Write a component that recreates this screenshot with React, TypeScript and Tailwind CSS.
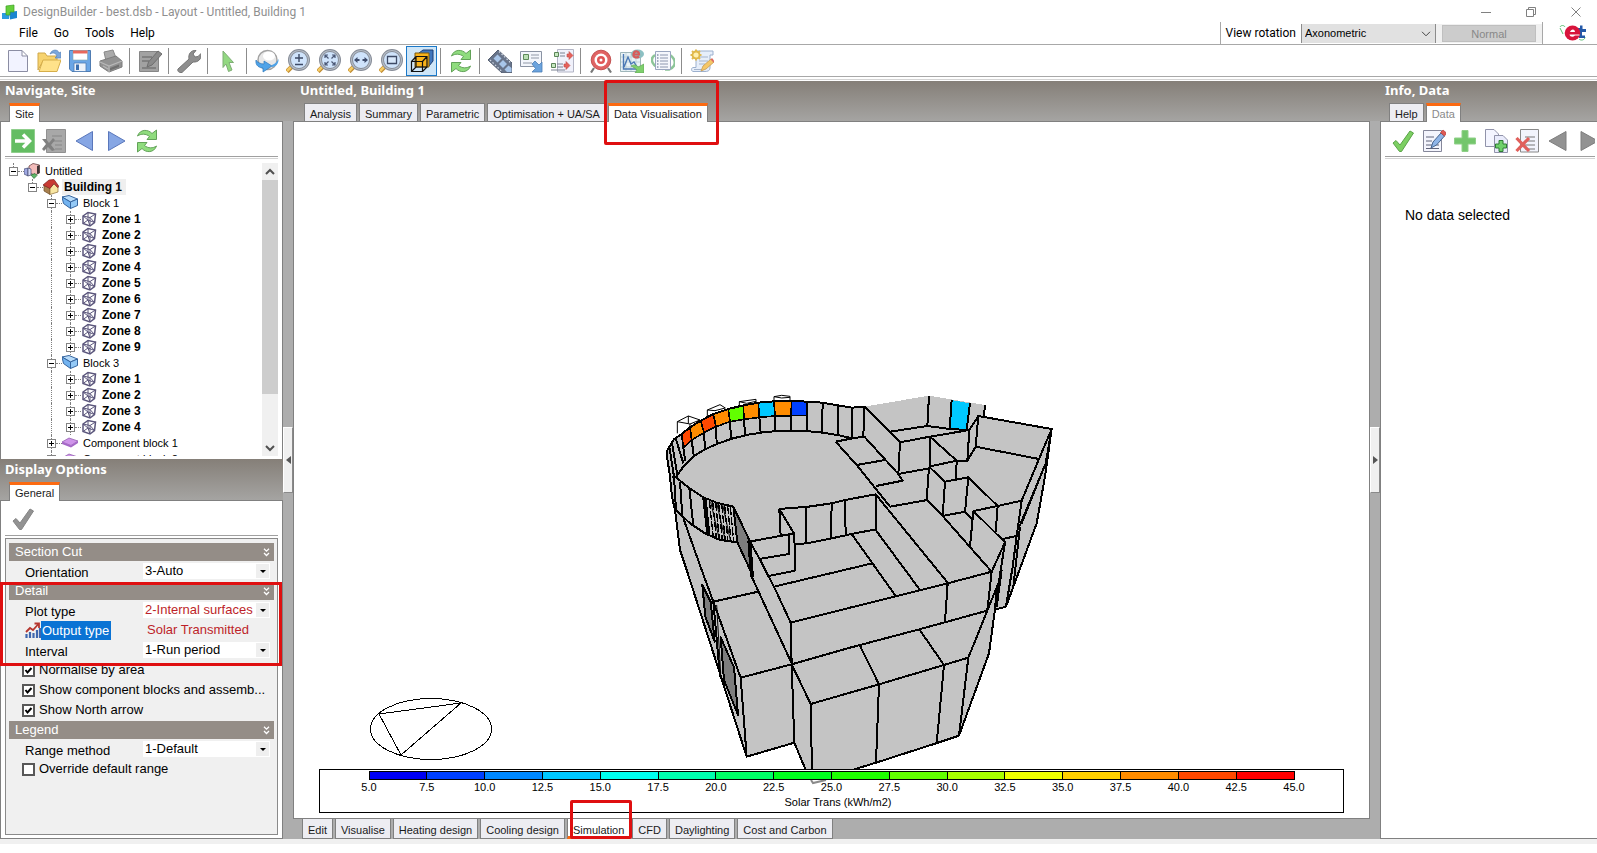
import React from "react";
import clsx from "clsx";

const SANS = "font-['Liberation_Sans',Arial,sans-serif]";
const SMALL = "font-['Liberation_Sans',Arial,sans-serif] text-[11px]";
const UI = "font-['Roboto','Open_Sans',sans-serif]";

type IconName =
  | "new" | "open" | "save" | "print" | "edit" | "wrench" | "cursor" | "orbit"
  | "zoom" | "zoomFit" | "zoomWidth" | "zoomWindow" | "cube" | "refresh" | "film" | "card"
  | "flow" | "target" | "chart" | "report" | "script" | "go" | "clear" | "left"
  | "right" | "check" | "checkGray" | "editNote" | "plus" | "copyAdd" | "deleteList" | "leftGray" | "rightGray";

const magnifier = (
  <>
    <path d="M1 22.500L6 17.500" stroke="#c08a30" strokeWidth="4.500" />
    <path d="M1 22L6 17" stroke="#f5cb66" strokeWidth="2.500" />
    <circle cx="13" cy="11" r="9.500" fill="#cfe3fb" stroke="#858b96" strokeWidth="3" />
    <circle cx="13" cy="11" r="9.500" fill="none" stroke="#b5bcc6" strokeWidth="1.200" />
  </>
);

const tickPath = "M2 14L5 11.500L9 16L19 2L22.500 4L10.500 22.500H8.500Z";

const pageLines = (
  <path d="M10 8H20M10 12H20M10 16H20M10 20H20" stroke="#777" strokeWidth="1" />
);

const icons: Record<IconName, React.ReactNode> = {
  new: <path d="M2.500 1.500H16L21.500 7V22.500H2.500ZM16 1.500V7H21.500" fill="#f2f3ff" stroke="#8b8da3" />,
  open: (
    <>
      <path d="M1 4H8L10 7H20V12H6L1 21Z" fill="#f7d36e" stroke="#d0a84a" />
      <path d="M2 22.500L6 11H24L20 22.500Z" fill="#ffe28a" stroke="#d6ae4a" />
      <path d="M13 5C15 0 21 0 22 4L24 3V9H18L20 7C19 4 16 3 13 5Z" fill="#7ba7dc" stroke="#5f89bd" strokeWidth=".8" />
    </>
  ),
  save: (
    <>
      <path d="M1.500 1.500H22.500V22.500H4L1.500 20Z" fill="#6ba6e6" stroke="#4f7cb2" />
      <path d="M5 1.500H19.500V11H5Z" fill="#fff" stroke="#8aa" strokeWidth=".6" />
      <path d="M5 1.500H19.500V4.500H5Z" fill="#e8685c" />
      <path d="M6 14H18V22.500H6Z" fill="#eef3fa" stroke="#4f7cb2" strokeWidth=".8" />
      <path d="M8 15.500H11V21H8Z" fill="#3b6fb0" />
    </>
  ),
  print: (
    <>
      <path d="M5 3L14 1L17 9L7 12Z" fill="#aaa" stroke="#888" />
      <path d="M1 12L17 7L23 12V18L10 23L1 17Z" fill="#929292" stroke="#7d7d7d" />
      <path d="M1 13L10 17L23 12M10 17V23M4 17L9 20" fill="none" stroke="#b8b8b8" strokeWidth="1.200" />
      <path d="M11 19L20 15.500V18L11 21.500Z" fill="#707070" />
    </>
  ),
  edit: (
    <>
      <path d="M1.500 2.500H20.500V22.500H1.500Z" fill="#a2a2a2" stroke="#868686" />
      <path d="M4 8H14M4 12H11M4 19H18" stroke="#777" strokeWidth="1.500" />
      <path d="M9 18L10.500 13L20 2L24 5L14 16Z" fill="#8a8a8a" stroke="#6e6e6e" />
    </>
  ),
  wrench: (
    <path d="M1 20L12 10C11 5 14 1 19 1.500L16 5L18 8L21 7.500L24 4.500C25 10 21 13.500 16 13L5 23.500C2 24 0 22 1 20Z" fill="#8f8f8f" stroke="#757575" />
  ),
  cursor: <path d="M7 2L17.500 13.500H13L16 21L12.500 22.500L10 15L7 18.500Z" fill="#92d881" stroke="#7fae76" />,
  orbit: (
    <>
      <circle cx="12.500" cy="11" r="9.500" fill="#e8e8e8" stroke="#a2a2a2" strokeWidth="1.500" />
      <ellipse cx="14" cy="7" rx="6" ry="4.500" fill="#fff" />
      <path d="M1 11C0 17 5 19 8 19V23L17 17L9 12V15C5 15 2 13 1 11Z" fill="#4fa3e8" stroke="#2e78bb" strokeWidth=".7" />
      <path d="M23.500 10C24 15 20 18 17 18V16C20 15 22 13 23.500 10Z" fill="#4fa3e8" />
    </>
  ),
  zoom: <>{magnifier}<path d="M9 9H17M13 5V13M9 15.500H17" stroke="#3d4a66" strokeWidth="1.400" /></>,
  zoomFit: (
    <>
      {magnifier}
      <path d="M8 9V6H11M15 6H18V9M18 13V16H15M11 16H8V13M8 6L11.500 9.500M18 6L14.500 9.500M18 16L14.500 12.500M8 16L11.500 12.500" fill="none" stroke="#4a5775" strokeWidth="1.200" />
    </>
  ),
  zoomWidth: <>{magnifier}<path d="M7 11H11.500M14.500 11H19" stroke="#3f4d6c" strokeWidth="1.800" /><path d="M6 11L9.500 8V14ZM20 11L16.500 8V14Z" fill="#3f4d6c" /></>,
  zoomWindow: <>{magnifier}<path d="M8.500 7.500H17.500V14.500H8.500Z" fill="#d8e8fb" stroke="#3d4a66" strokeWidth="1.300" /></>,
  cube: (
    <>
      <path d="M9 4L13 1H23V12L19 17Z" fill="#4177bd" stroke="#1d3f75" />
      <path d="M5 4H19V18H5Z" fill="#f9b31b" stroke="#7b5a13" />
      <path d="M1.500 12.500H12.500V22.500H1.500ZM1.500 12.500L6 7.500H17V18L12.500 22.500M12.500 12.500L17 7.500M6 7.500V18H17M6 18L1.500 22.500" fill="none" stroke="#111" strokeWidth="1.200" />
    </>
  ),
  refresh: (
    <>
      <path d="M2.500 7C5 0 13 0 17 4.500L21.500 1V10.500H12L14.500 7.500C11 4.500 6 4.500 2.500 7Z" fill="#8fdc7e" stroke="#62a258" />
      <path d="M21.500 17C19 24 11 24 7 19.500L2.500 23V13.500H12L9.500 16.500C13 19.500 18 19.500 21.500 17Z" fill="#8fdc7e" stroke="#62a258" />
    </>
  ),
  film: (
    <>
      <path d="M0 11L10 1L24 14V24H14Z" fill="#68748a" stroke="#566072" />
      <path d="M5.500 9.500L9.500 5.500L13.500 9.500L9.500 13.500ZM11 15L15 11L19 15L15 19ZM16.500 20.500L20.500 16.500L23.500 19V23H19Z" fill="#a8c6ea" />
      <path d="M2 11L14.500 23M11 2.500L23.500 14.500" stroke="#d0d8e4" strokeWidth="1.200" strokeDasharray="1.500 2" />
    </>
  ),
  card: (
    <>
      <path d="M1.500 2.500H22.500V17.500H1.500Z" fill="#f3f6fc" stroke="#8a93a3" />
      <path d="M4.500 5.500H9.500V10.500H4.500Z" fill="#b9dfb4" stroke="#5d8a5b" />
      <path d="M12 6H20M12 9H20M4 14H13" stroke="#9098a6" />
      <path d="M13 15L16 12L20 16L23 13V23H13L16.500 19.500Z" fill="#6ba3dd" stroke="#4d7eb5" strokeWidth=".8" />
    </>
  ),
  flow: (
    <>
      <path d="M7.500 .5H23.500V23H7.500Z" fill="#f0f1fb" stroke="#b3b5c5" />
      <path d="M4.500 3.500H8.500V7.500H4.500ZM1.500 14.500H5.500V18.500H1.500Z" fill="#c6e8c0" stroke="#5b8458" />
      <path d="M10 4H15M10 7H15M7 15H13M7 18H13M1 21H15" stroke="#7a8292" />
      <path d="M17 5H19V2.500L23 6.500L19 10.500V8H17ZM14 15H16V12.500L20 16.500L16 20.500V18H14Z" fill="#e5615b" stroke="#c04a48" strokeWidth=".6" />
    </>
  ),
  target: (
    <>
      <path d="M5 19L2 23.500M19 19L22 23.500" stroke="#777" strokeWidth="2.200" />
      <circle cx="12" cy="11" r="9.800" fill="#e06363" stroke="#c35252" />
      <circle cx="12" cy="11" r="6.500" fill="#fff" />
      <circle cx="12" cy="11" r="4" fill="#df5656" />
      <circle cx="12" cy="11" r="1.500" fill="#fff" />
    </>
  ),
  chart: (
    <>
      <path d="M.5 3.500H20.500V22.500H.5Z" fill="#e9f2f6" stroke="#9fb6ba" />
      <path d="M1 8H20M1 13H20M1 18H20M6 4V22M11 4V22M16 4V22" stroke="#b6cbd2" strokeWidth=".7" />
      <path d="M3.500 5V20H18M4 18L8 8L11 15L14 13L17 18" fill="none" stroke="#4a78b4" strokeWidth="1.400" />
      <ellipse cx="17.500" cy="5" rx="6.500" ry="4.500" fill="#8cc0c3" />
      <path d="M13 5.500H19C19 2 14.500 1 13.500 5C13 9 17 9 19 7.500" fill="none" stroke="#d85b5b" strokeWidth="2.200" />
      <path d="M11 17C14 15 17 16 18 18L24 15V24H15L17 21C15 19 13 18 11 17Z" fill="#7ed06d" stroke="#62a558" strokeWidth=".7" />
    </>
  ),
  report: (
    <>
      <path d="M4 6C-2 10 1 18 12 20" fill="none" stroke="#8cc598" strokeWidth="2.500" />
      <path d="M19 6C26 11 25 18 18 20.500H14" fill="none" stroke="#8cc598" strokeWidth="2.500" />
      <path d="M4.500 2.500H19.500V20.500H4.500Z" fill="#f5f7fd" stroke="#9aa6c0" />
      <path d="M9 6H17M9 9H17M9 12H17M9 15H17M9 18H17" stroke="#8c96ae" />
      <path d="M6 6H7.500M6 9H7.500M6 12H7.500M6 15H7.500M6 18H7.500" stroke="#4c5c80" />
    </>
  ),
  script: (
    <>
      <path d="M6 2H23V6H20V19C20 22 17 22.500 15 22.500H3C1 22 1 19 3 18.500H6Z" fill="#e6eefa" stroke="#9cb0ce" />
      <path d="M10 8H18M9 12H18M9 15H15M4 20.500H14" stroke="#a5b4cc" />
      <path d="M6 .5V11.500M.5 6H11.500M2 2L10 10M10 2L2 10" stroke="#e0ba52" strokeWidth="2" />
      <circle cx="6" cy="6" r="3.500" fill="#fff0b0" stroke="#e0b848" strokeWidth="1.800" />
      <path d="M11 22L13 17L21 10L24 13L16 20Z" fill="#f5c768" stroke="#c69b50" strokeWidth=".8" />
      <path d="M20.500 10.500L22 9L24.500 12L23.500 13.500Z" fill="#dd6a62" />
    </>
  ),
  go: (
    <>
      <path d="M.5 .5H23.500V23.500H.5Z" fill="#64bd63" stroke="#8fce8c" />
      <path d="M4 12H18M12 5.500L18.500 12L12 18.500" fill="none" stroke="#fff" strokeWidth="3.500" />
    </>
  ),
  clear: (
    <>
      <path d="M4.500 .5H23.500V23.500H4.500Z" fill="#a8a8a8" stroke="#919191" />
      <path d="M10 7H20M10 12H20M13 16H20M13 20H20" stroke="#868686" />
      <path d="M0 10H4L7 14L11 9L13 11L9 16L13 21L10 22L6 18L2 22L0 20L4 15Z" fill="#808080" />
    </>
  ),
  left: <path d="M19.500 2.500V21.500L3 12Z" fill="#86a6e4" stroke="#5a77bb" />,
  right: <path d="M4.500 2.500V21.500L21 12Z" fill="#86a6e4" stroke="#5a77bb" />,
  check: <path d={tickPath} fill="#7ccf62" stroke="#5aa348" />,
  checkGray: <path d={tickPath} fill="#929292" stroke="#858585" />,
  editNote: (
    <>
      <path d="M1.500 1.500H19.500V22.500H1.500Z" fill="#f4f5fd" stroke="#85879a" />
      <path d="M4 8H12M4 12H10M4 16H17M4 19.500H17" stroke="#61647a" />
      <path d="M9 19L11 13L19 4L22.500 7L14.500 16Z" fill="#8fb5e8" stroke="#46648f" />
      <path d="M18.500 3.500L21 1L24.500 4L22.500 7Z" fill="#df5a55" stroke="#b13e3c" strokeWidth=".7" />
    </>
  ),
  plus: <path d="M9 1.500H15V9H22.500V15H15V22.500H9V15H1.500V9H9Z" fill="#74c66c" stroke="#8fd088" />,
  copyAdd: (
    <>
      <path d="M1.500 .5H10L14.500 5V17.500H1.500Z" fill="#f4f5ff" stroke="#9193aa" />
      <path d="M10.500 6.500H19L23.500 11V23.500H10.500Z" fill="#e9ebfb" stroke="#9193aa" />
      <path d="M15 11.500H19V15H22.500V19H19V22.500H15V19H11.500V15H15Z" fill="#6ed06a" stroke="#2f7b34" />
    </>
  ),
  deleteList: (
    <>
      <path d="M5.500 .5H23.500V23H5.500Z" fill="#f2f4fc" stroke="#888" />
      {pageLines}
      <path d="M1.500 9L14 22M14 9L1.500 22" stroke="#e0605c" strokeWidth="3.200" />
    </>
  ),
  leftGray: <path d="M20 2.500V21.500L3 12Z" fill="#929292" stroke="#7e7e7e" />,
  rightGray: <path d="M4 2.500V21.500L21 12Z" fill="#929292" stroke="#7e7e7e" />,
};

function ToolButton({ icon, label, active }: { icon: IconName; label: string; active?: boolean }) {
  return (
    <button
      type="button"
      aria-label={label}
      className={clsx(
        "flex h-[30px] w-[31px] flex-none items-center justify-center",
        active && "border border-[#1c79c8] bg-[#cfe6f8]"
      )}
    >
      <svg viewBox="0 0 24 24" className="size-6 flex-none" fill="none">
        {icons[icon]}
      </svg>
    </button>
  );
}

const mainTools: ([IconName, string] | null)[] = [
  ["new", "New"], ["open", "Open"], ["save", "Save"], ["print", "Print"], null,
  ["edit", "Edit"], null,
  ["wrench", "Settings"], null,
  ["cursor", "Select"], null,
  ["orbit", "Orbit"], ["zoom", "Zoom"], ["zoomFit", "Zoom to fit"], ["zoomWidth", "Zoom width"], ["zoomWindow", "Zoom window"], ["cube", "Axonometric view"], null,
  ["refresh", "Refresh"], null,
  ["film", "Movie"], ["card", "Card"], ["flow", "Flow"], null,
  ["target", "Target"], ["chart", "Chart"], ["report", "Report"], null,
  ["script", "Script"],
];

function Tab({ label, active, muted, bottom }: { label: string; active?: boolean; muted?: boolean; bottom?: boolean }) {
  return (
    <button
      type="button"
      className={clsx(
        SMALL,
        "relative flex flex-none items-center whitespace-nowrap border-x border-[#808080] px-[5px] leading-4",
        bottom ? "h-5 border-b" : "h-[18px]",
        !active && "bg-[#ededf2] pt-[2px]",
        !active && !bottom && "border-t",
        active && "bg-white",
        active && !bottom && "z-10 -mb-px h-[19px] border-t-[3px] border-t-[#fb6a12]",
        active && bottom && "border-b-[3px] border-b-[#fb6a12] pt-1",
        muted ? "text-[#8a8a8a]" : "text-[#1a1a1a]"
      )}
    >
      {label}
    </button>
  );
}

function PanelHeader({ title, children, className }: { title: string; children: React.ReactNode; className?: string }) {
  return (
    <div className={clsx("h-10 flex-none", className)}>
      <h2 className="pl-[5px] font-['Noto_Sans','DejaVu_Sans',sans-serif] text-[13px] leading-[19px] font-bold text-white">{title}</h2>
      <div className="mt-[3px] flex items-end gap-[2px] pl-[9px]">{children}</div>
    </div>
  );
}

function Rule() {
  return <div className="h-[3px] flex-none border-t border-b border-t-[#a0a0a0] border-b-[#d4d4d4]" />;
}

/* Navigator tree */
type Kind = "site" | "building" | "block" | "zone" | "component";
type Node = { level: number; kind: Kind; label: string };

const zones = (n: number): Node[] =>
  Array.from({ length: n }, (_, i) => ({ level: 3, kind: "zone", label: `Zone ${i + 1}` }));

const tree: Node[] = [
  { level: 0, kind: "site", label: "Untitled" },
  { level: 1, kind: "building", label: "Building 1" },
  { level: 2, kind: "block", label: "Block 1" },
  ...zones(9),
  { level: 2, kind: "block", label: "Block 3" },
  ...zones(4),
  { level: 2, kind: "component", label: "Component block 1" },
  { level: 2, kind: "component", label: "Component block 2" },
];

const treeIcons: Record<Kind, React.ReactNode> = {
  site: (
    <>
      <path d="M5 3L9 .5L15.500 2V10L11 12L5 10Z" fill="#f3bdbb" stroke="#6a4545" strokeWidth=".8" />
      <path d="M13 3L15.500 2V10L13 11Z" fill="#403636" />
      <path d="M0 6L4 5V13L0 11Z" fill="#9fa8e2" stroke="#44496f" strokeWidth=".7" />
      <path d="M4 5L7 6V12L4 13Z" fill="#d5d9f8" stroke="#44496f" strokeWidth=".7" />
      <path d="M7 12L11 10.500L13 12.500L10 15.500Z" fill="#5fb868" stroke="#2d6b36" strokeWidth=".7" />
    </>
  ),
  building: (
    <>
      <path d="M1 6L7 9V15.500L1 12Z" fill="#a8804e" stroke="#6b4a25" strokeWidth=".7" />
      <path d="M7 9L11 5L15 8V13L7 15.500Z" fill="#f8e6a2" stroke="#8a6a35" strokeWidth=".7" />
      <path d="M0 6L6 1L11 .5L16 7.500L14.500 8.500L11 4.500L7 9.500Z" fill="#c93a33" stroke="#7a2422" strokeWidth=".7" />
    </>
  ),
  block: (
    <>
      <path d="M0 2L7 .5L15.500 4L8.500 7Z" fill="#b8dcfa" stroke="#35649e" />
      <path d="M0 2L8.500 7V13.500L1.500 8.500Z" fill="#72b3f0" stroke="#35649e" />
      <path d="M8.500 7L15.500 4V10.500L8.500 13.500Z" fill="#94c9f6" stroke="#35649e" />
    </>
  ),
  zone: (
    <g fill="none" stroke="#5b567c">
      <path d="M2 5L7 1.500L14.500 3L13.500 11.500L9 15L2 12.500Z" strokeWidth="1.500" />
      <path d="M2 5L9 6.500L14.500 3M9 6.500V15M7 1.500V9L2 12.500M7 9L13.500 11.500M9 6.500L13.500 11.500M2 5L7 9L9 15" strokeWidth="1" />
    </g>
  ),
  component: (
    <>
      <path d="M0 7L7 3L16 6L9 10.500Z" fill="#cf94ea" stroke="#8a56a8" strokeWidth=".7" />
      <path d="M0 7L9 10.500L16 6V8L9 12.500L0 9Z" fill="#a566c8" />
    </>
  ),
};

function TreeRow({ node }: { node: Node }) {
  const bold = node.kind === "zone" || node.kind === "building";
  const closed = node.kind === "zone" || node.kind === "component";
  return (
    <li className="flex h-4 flex-none items-center">
      {Array.from({ length: node.level }, (_, i) => (
        <span key={i} className="h-full w-[19px] flex-none pl-1">
          {i === 2 && <span className="block h-full border-l border-dotted border-[#808080]" />}
        </span>
      ))}
      <span className="flex h-full w-[9px] flex-none flex-col items-center">
        <span className="flex-1 border-l border-dotted border-[#808080]" />
        <button type="button" aria-label={`Toggle ${node.label}`} className="flex size-[9px] flex-none items-center justify-center border border-[#848484] bg-white">
          <svg viewBox="0 0 5 5" className="size-[5px]" shapeRendering="crispEdges">
            <path d={closed ? "M0 2.500H5M2.500 0V5" : "M0 2.500H5"} stroke="#000" />
          </svg>
        </button>
        <span className={clsx("flex-1 border-l border-dotted", node.level > 1 ? "border-[#808080]" : "border-transparent")} />
      </span>
      <span className="w-[6px] flex-none border-t border-dotted border-[#808080]" />
      <svg viewBox="0 0 16 16" className="size-4 flex-none">{treeIcons[node.kind]}</svg>
      <span
        className={clsx(
          "ml-[3px] px-[2px] leading-4 whitespace-nowrap text-black",
          bold ? clsx(SANS, "text-[12px] font-bold") : SMALL,
          node.kind === "building" && "bg-[#efefef] pr-1"
        )}
      >
        {node.label}
      </span>
    </li>
  );
}

function Chevron({ d }: { d: string }) {
  return (
    <svg viewBox="0 0 10 10" className="size-[10px]" fill="none" stroke="#505050" strokeWidth="2">
      <path d={d} />
    </svg>
  );
}

function Navigator() {
  return (
    <section className="flex min-h-0 flex-1 flex-col">
      <PanelHeader title="Navigate, Site">
        <Tab label="Site" active />
      </PanelHeader>
      <div className="flex min-h-0 flex-1 flex-col border-x border-t border-[#808080] bg-white px-1 pb-[3px]">
        <div className="flex h-[34px] flex-none items-center pt-1 pl-[2px]">
          <ToolButton icon="go" label="Go" />
          <ToolButton icon="clear" label="Clear" />
          <ToolButton icon="left" label="Previous" />
          <ToolButton icon="right" label="Next" />
          <ToolButton icon="refresh" label="Reload" />
        </div>
        <Rule />
        <div className="mt-1 flex min-h-0 flex-1 overflow-hidden">
          <ul className="min-w-0 flex-1 overflow-hidden pl-1">
            {tree.map((node, i) => (
              <TreeRow key={i} node={node} />
            ))}
          </ul>
          <div className="flex w-4 flex-none flex-col bg-[#f0f0f0]">
            <button type="button" aria-label="Scroll up" className="flex h-[17px] flex-none items-center justify-center"><Chevron d="M1 7L5 3L9 7" /></button>
            <div className="h-[73%] bg-[#cdcdcd]" />
            <div className="flex-1" />
            <button type="button" aria-label="Scroll down" className="flex h-[17px] flex-none items-center justify-center"><Chevron d="M1 3L5 7L9 3" /></button>
          </div>
        </div>
      </div>
    </section>
  );
}

/* Display options */
function SectionBar({ title, className }: { title: string; className?: string }) {
  return (
    <div className={clsx("flex h-[18px] items-center justify-between bg-[#948d87] pr-1 pl-[6px] text-white", className)}>
      <h3 className="text-[13px] leading-[18px]">{title}</h3>
      <svg viewBox="0 0 7 9" className="h-[9px] w-[7px]" fill="none" stroke="#fff" strokeWidth="1.300">
        <path d="M1 .8L3.500 3.200L6 .8M1 5L3.500 7.500L6 5" />
      </svg>
    </div>
  );
}

function Option({ id, label, value, red }: { id: string; label: string; value: string; red?: boolean }) {
  return (
    <div className="flex h-5 items-center pr-1">
      <label htmlFor={id} className="w-[134px] flex-none pt-[3px] pl-4">{label}</label>
      <div className="relative h-4 flex-1">
        <select id={id} defaultValue={value} className={clsx("h-4 w-full appearance-none bg-white pl-[2px] leading-4", red && "text-[#bd1f29]")}>
          <option>{value}</option>
        </select>
        <span className="pointer-events-none absolute top-px right-px flex h-[14px] w-[13px] items-center justify-center bg-[#efefef]">
          <svg viewBox="0 0 6 3" className="h-[3px] w-[6px]"><path d="M0 0H6L3 3Z" /></svg>
        </span>
      </div>
    </div>
  );
}

function CheckOption({ label, checked }: { label: string; checked?: boolean }) {
  return (
    <label className="flex h-5 items-center gap-1 pl-[13px] whitespace-nowrap">
      <span className="relative flex size-[13px] flex-none">
        <input type="checkbox" defaultChecked={checked} className="peer size-[13px] appearance-none border-2 border-[#585858] bg-white" />
        <svg viewBox="0 0 13 13" className="pointer-events-none absolute inset-0 hidden size-[13px] peer-checked:block" fill="none" stroke="#000" strokeWidth="2">
          <path d="M3.500 6L5.500 8.500L9.500 4" />
        </svg>
      </span>
      {label}
    </label>
  );
}

function DisplayOptions() {
  return (
    <section className="flex-none">
      <PanelHeader title="Display Options" className="h-[41px] bg-[linear-gradient(to_bottom,#857f78,#a5a4a2)] pt-px">
        <Tab label="General" active />
      </PanelHeader>
      <div className={clsx(SANS, "border border-[#808080] bg-white px-1 pb-[3px] text-[13px] leading-4")}>
        <div className="flex h-[34px] items-center pt-[2px] pl-[2px]">
          <ToolButton icon="checkGray" label="Apply" />
        </div>
        <div className="mb-[2px] border-t border-[#a0a0a0]" />
        <div className="border border-[#8a8a8a] bg-[#f0f0f0] px-[3px] pt-1 pb-[55px]">
          <SectionBar title="Section Cut" />
          <Option id="orientation" label="Orientation" value="3-Auto" />
          <div className="relative mt-px">
            <SectionBar title="Detail" />
            <Option id="plot" label="Plot type" value="2-Internal surfaces" red />
            <div className="flex h-5 items-center pl-4">
              <svg viewBox="0 0 16 16" className="size-4 flex-none">
                <path d="M1.500 16V12M5 16V10M8.500 16V11M12 16V8M15 16V6" stroke="#3f66ae" strokeWidth="2.200" />
                <path d="M1 10L5 6L8 8L13 2.500M9.500 1.500H14V6" fill="none" stroke="#b5362e" strokeWidth="1.800" />
              </svg>
              <span className="w-[70px] bg-[#0a73d4] pl-px leading-[19px] text-white">Output type</span>
              <span className="pl-9 text-[#bd1f29]">Solar Transmitted</span>
            </div>
            <Option id="interval" label="Interval" value="1-Run period" />
            <div className="pointer-events-none absolute top-0 -right-[8px] -bottom-[6px] -left-[9px] z-10 border-[3px] border-[#df0f10]" />
          </div>
          <CheckOption label="Normalise by area" checked />
          <CheckOption label="Show component blocks and assemb..." checked />
          <CheckOption label="Show North arrow" checked />
          <SectionBar title="Legend" className="mt-px" />
          <Option id="range" label="Range method" value="1-Default" />
          <CheckOption label="Override default range" />
        </div>
      </div>
    </section>
  );
}

/* Viewport */
const legendColours = [
  "#0000f5", "#0040ff", "#0088ff", "#00c8ff", "#00fff0", "#00ffae", "#00ff66", "#00ff1e",
  "#1eff00", "#62ff00", "#a8ff00", "#eeff00", "#ffd000", "#ff8c00", "#ff4800", "#ff0000",
];
const legendStep = 925 / 16;

const wallTiles = [
  { d: "M95 162L120 142L125 180L100 203Z", fill: "#ff4800" },
  { d: "M120 142L152 122L162 158L125 180Z", fill: "#ff8c00" },
  { d: "M152 122L190 102L198 140L162 158Z", fill: "#ff4800" },
  { d: "M190 102L235 87L240 125L198 140Z", fill: "#ff8c00" },
  { d: "M235 87L280 76L282 118L240 125Z", fill: "#62ff00" },
  { d: "M280 76L325 68L328 112L282 118Z", fill: "#ff8c00" },
  { d: "M325 68L372 64L375 108L328 112Z", fill: "#00c8ff" },
  { d: "M372 64L425 62L423 107L375 108Z", fill: "#ff8c00" },
  { d: "M425 62L470 65L471 107L423 107Z", fill: "#0040ff" },
];

function Building() {
  return (
    <g transform="translate(650 380) scale(.333333)" fill="none" stroke="#000" strokeWidth="6" strokeLinejoin="round" shapeRendering="crispEdges">
      <path
        d="M52 210L72 178L95 162L120 142L152 122L190 102L235 87L280 76L325 68L372 64L425 62L470 65L518 68L563 76L607 83L643 80L837 47L1005 75L1002 111L1205 147L1185 280L1160 430L1110 570L1068 680L1037 688L1017 820L927 1067L858 1090L678 1148L600 1172L468 1172L433 1088L290 1130L210 890L110 570L90 510L75 390L60 290Z"
        fill="#c4c4c4"
        stroke="none"
      />
      {/* roof-light boxes behind the drum wall */}
      <path d="M82 160V125L115 108L150 120M82 125L120 132L150 120M120 132V142M115 108V130M172 108V90L210 74L226 84M172 90L195 92L226 84M268 76V65L318 58V68M268 65L290 70L318 64M372 62V50L395 46L420 49V60M372 50L395 54L420 52" strokeWidth="3" />
      {wallTiles.map((t) => (
        <path key={t.d} d={t.d} fill={t.fill} strokeWidth="5" />
      ))}
      {/* drum */}
      <path d="M52 210L72 178L95 162L120 142L152 122L190 102L235 87L280 76L325 68L372 64L425 62L470 65L518 68L563 76L607 83L643 80" />
      <path d="M78 292C100 255 130 225 165 208C240 170 330 152 425 152C490 152 560 163 607 175L643 170" />
      <path d="M66 188L82 285M78 178L100 250M100 203L106 244M125 180L131 227M162 158L165 208M198 140L200 190M240 125L243 174M282 118L285 164M328 112L332 157M375 108V153M423 107V152M471 65V152M518 68L516 156M563 76V165M607 83L605 175M643 80L640 170" />
      <path d="M52 210V235L60 290L66 350L75 390L90 510L110 570L290 1130M58 200L72 290L78 390" />
      <path d="M78 292L115 322L160 352L200 368L250 380M78 390L120 430L165 460L210 480L262 487M90 305L97 408M118 325L130 436M66 290H80" />
      <path d="M160 352L172 460M166 355L178 464" strokeWidth="7" />
      <path d="M178 362L190 472M188 365L199 475M197 368L208 478M206 371L217 481M215 373L226 483M224 375L234 484M233 377L243 485M241 379L251 486" strokeWidth="4" strokeDasharray="26 5" />
      <path d="M182 365L208 478M200 368L226 483M218 374L242 485" strokeWidth="3" />
      <path d="M250 380L262 487L303 575L298 480Z" fill="#7d7d7d" />
      <path d="M298 482L306 592" strokeWidth="12" />
      {/* stair well and inner rooms */}
      <path d="M298 482L328 535L355 588L372 620L422 728M305 590L425 850M298 485L433 460M418 465V522L328 537M433 460L435 572L355 588M388 387L433 462M388 387L392 467M388 387L475 380L545 370L585 360L677 343V448M468 383L467 490M545 370L543 475M585 360L587 465M437 492L470 490L545 475L605 462L677 448M372 620L667 550M605 462L737 648M557 185L607 175M557 185L620 255L720 380M620 255L705 240" />
      {/* lower left wing */}
      <path d="M100 415L155 570L190 665L272 893L425 853M190 665L325 635M272 893L290 1130L433 1088M422 728L425 853L433 1088L468 1172M425 853L482 972L486 1172M482 972L687 913M190 665L210 890" />
      <path d="M200 675L212 880" strokeWidth="3" />
      <path d="M157 615L182 665L194 785L166 710Z" fill="#7d7d7d" />
      <path d="M212 772L252 862L264 1005L222 900Z" fill="#7d7d7d" />
      {/* back block and right wing */}
      <g transform="translate(600 0)">
        <path d="M305 60L358 70L350 150L298 147Z" fill="#00c8ff" stroke="none" />
        <path d="M43 80L150 187L145 282M43 170L145 282L158 302L78 318M120 380L232 360M150 187L240 170L358 150M120 155L232 138L300 147L355 150M237 47L232 138M305 60L299 147M360 70L350 150M405 75L402 108" />
        <path d="M385 108L605 147L567 237L515 362M385 108L358 150L352 242L377 200L385 108M377 200L567 237M605 147L587 250L508 440M605 147L585 290L560 430L468 680M240 170V260M240 170L320 242L318 298M145 282L237 265M237 260L320 242H352M237 260L230 362M237 260L285 305L278 408M285 305L355 292L345 397M355 292L443 378L437 455M370 393L443 378L515 362L500 468L457 477M370 393L360 500M370 393L465 487M278 408L345 395L367 418M230 360L278 408L425 575L465 487M587 250L515 430" />
        <path d="M465 487L440 650M500 468L488 560L468 680M510 440L490 620M77 343L293 608M77 450L210 630M425 575L412 690M-228 620L67 550" />
      </g>
      {/* front volumes */}
      <g transform="translate(600 570)">
        <path d="M-178 158L0 113L293 40L425 5M293 40L285 155M-175 283L0 233L208 178L408 123M30 227L87 343L78 578M208 178L282 285L260 520M87 343L282 285L355 263L327 497M355 263L445 40M440 60L435 118L417 250L327 497L258 520L78 578L0 602M437 118L468 110M455 0L440 110" />
      </g>
    </g>
  );
}

function Viewport() {
  return (
    <svg viewBox="294 122 1075 696" className="block h-full w-full" role="img" aria-label="Solar gain plotted on building surfaces">
      <g fill="none" stroke="#000" shapeRendering="crispEdges">
        <ellipse cx="431" cy="729" rx="60.500" ry="30.500" />
        <path d="M379 714L461 703L401 755Z" />
      </g>
      <Building />
      <rect x="319.500" y="769.500" width="1024" height="43" fill="#fff" stroke="#000" />
      <path d="M811 780L813 783L826 780" fill="none" stroke="#8a8a8a" strokeWidth="2" />
      {legendColours.map((c, i) => (
        <rect key={c} x={369 + i * legendStep} y="771.500" width={legendStep} height="8" fill={c} stroke="#000" shapeRendering="crispEdges" />
      ))}
      <g className={SANS} fontSize="11" textAnchor="middle">
        {Array.from({ length: 17 }, (_, i) => (
          <text key={i} x={369 + i * legendStep} y="791">{(5 + i * 2.5).toFixed(1)}</text>
        ))}
        <text x="838" y="806">Solar Trans (kWh/m2)</text>
      </g>
    </svg>
  );
}

function Splitter({ flip }: { flip?: boolean }) {
  return (
    <div className="flex w-[10px] flex-none items-center">
      <button type="button" aria-label="Collapse panel" className="flex h-[66px] w-[10px] items-center justify-center border border-[#8a8a8a] border-t-white border-l-white bg-[#f0f0f0]">
        <svg viewBox="0 0 5 8" className="h-2 w-[5px]"><path d={flip ? "M0 0L5 4L0 8Z" : "M5 0L0 4L5 8Z"} fill="#555" /></svg>
      </button>
    </div>
  );
}

function TitleBar() {
  return (
    <div className="flex h-[22px] flex-none items-center pt-px pr-4 pl-[2px]">
      <svg viewBox="0 0 16 16" className="size-4">
        <path d="M0 9H7V15H0Z" fill="#2b9be0" />
        <path d="M7 8L15 7V14L8 15.500Z" fill="#1b86d0" />
        <path d="M4 2L12 1V8H8V11H4Z" fill="#65cf3b" stroke="#3c9d22" strokeWidth=".7" />
      </svg>
      <h1 className={clsx(UI, "pl-[5px] text-[12px] leading-4 whitespace-nowrap text-[#8f8f8f]")}>DesignBuilder - best.dsb - Layout - Untitled, Building 1</h1>
      <div className="ml-auto flex items-center gap-[35px]">
        {["M0 5.500H10", "M2.500 2.500V.5H9.500V7.500H7.500M.5 2.500H7.500V9.500H.5Z", "M.5 .5L9.500 9.500M9.500 .5L.5 9.500"].map((d, i) => (
          <button key={d} type="button" aria-label={["Minimize", "Restore", "Close"][i]}>
            <svg viewBox="0 0 10 10" className="size-[10px]" fill="none" stroke="#808080"><path d={d} /></svg>
          </button>
        ))}
      </div>
    </div>
  );
}

function MenuBar() {
  return (
    <div className={clsx(UI, "flex h-[23px] flex-none text-[12px] text-black")}>
      <nav className="flex flex-1 items-center gap-4 border-b border-[#a8a8a8] pl-[19px]">
        {["File", "Go", "Tools", "Help"].map((m) => (
          <button key={m} type="button">{m}</button>
        ))}
      </nav>
      <div className="flex items-center border-x border-b border-[#a8a8a8]">
        <label htmlFor="rotation" className="px-[5px]">View rotation</label>
        <div className="relative h-[19px] w-[135px] border-x border-[#8c8c8c]">
          <select id="rotation" defaultValue="Axonometric" className={clsx(SMALL, "h-[19px] w-full appearance-none bg-[#e1e1e1] pl-[3px] leading-4")}>
            <option>Axonometric</option>
          </select>
          <svg viewBox="0 0 10 6" className="pointer-events-none absolute top-[7px] right-1 h-[6px] w-[10px]" fill="none" stroke="#444"><path d="M1 .8L5 4.800L9 .8" /></svg>
        </div>
        <div className="flex h-[19px] items-center bg-[#f0f0f0] px-[6px]">
          <button type="button" disabled className={clsx(SMALL, "h-[17px] w-[94px] border border-[#bfbfbf] bg-[#cccccc] leading-4 text-[#888]")}>Normal</button>
        </div>
      </div>
      <div className="w-[54px] border-b border-[#a8a8a8] pl-4">
        <svg viewBox="0 0 28 18" className="mt-[2px] h-[18px] w-7" fill="none">
          <path d="M1 3C2 1 5 1 6 3M1 4L4 10M20 15C22 17 26 16 26 13" stroke="#5bbf73" />
          <path d="M18 4H21V1.500H23.500V5H27V8H23V11.500H26V14H20Z" fill="#2459a8" />
          <ellipse cx="13.500" cy="9" rx="7.800" ry="7.500" fill="#d8143c" />
          <path d="M11 8C12 4.500 16 4.500 16 8ZM10.500 10.500H20.500V11.500H16C14 13.500 11 13 10.500 10.500Z" fill="#fff" />
        </svg>
      </div>
    </div>
  );
}

export default function App() {
  return (
    <div className="flex h-screen flex-col overflow-hidden bg-white">
      <TitleBar />
      <MenuBar />
      <div className="flex h-[31px] flex-none items-center pl-[2px]">
        {mainTools.map((t, i) =>
          t ? (
            <ToolButton key={i} icon={t[0]} label={t[1]} active={t[0] === "cube"} />
          ) : (
            <span key={i} className="mx-[3px] h-[26px] w-[2px] flex-none border-l border-[#8c8c8c]" />
          )
        )}
      </div>
      <div className="h-1 flex-none border-y border-t-[#a8a8a8] border-b-[#d4d4d4]" />
      <main className="mt-px flex min-h-0 flex-1 bg-[#adadad] bg-[linear-gradient(to_bottom,#857f78,#a5a4a2)] bg-[length:100%_40px] bg-no-repeat">
        <aside className="flex w-[283px] flex-none flex-col">
          <Navigator />
          <DisplayOptions />
        </aside>
        <Splitter />
        <section className="flex min-w-0 flex-1 flex-col">
          <PanelHeader title="Untitled, Building 1" className="pl-[2px]">
            <Tab label="Analysis" />
            <Tab label="Summary" />
            <Tab label="Parametric" />
            <Tab label="Optimisation + UA/SA" />
            <div className="relative flex items-end">
              <Tab label="Data Visualisation" active />
              <div className="pointer-events-none absolute -top-[23px] -right-[11px] -bottom-[24px] -left-1 z-20 rounded-xs border-[3px] border-[#df0f10]" />
            </div>
          </PanelHeader>
          <div className="min-h-0 flex-1 border border-[#808080] bg-white">
            <Viewport />
          </div>
          <div className="flex h-5 flex-none gap-[2px] pl-[9px]">
            <Tab label="Edit" bottom />
            <Tab label="Visualise" bottom />
            <Tab label="Heating design" bottom />
            <Tab label="Cooling design" bottom />
            <div className="relative">
              <Tab label="Simulation" active bottom />
              <div className="pointer-events-none absolute -top-[19px] -right-[2px] bottom-0 left-[3px] z-20 rounded-xs border-[3px] border-[#df0f10]" />
            </div>
            <Tab label="CFD" bottom />
            <Tab label="Daylighting" bottom />
            <Tab label="Cost and Carbon" bottom />
          </div>
        </section>
        <Splitter flip />
        <aside className="flex w-[217px] flex-none flex-col">
          <PanelHeader title="Info, Data">
            <Tab label="Help" />
            <Tab label="Data" active muted />
          </PanelHeader>
          <div className="min-h-0 flex-1 border-y border-l border-[#808080] bg-white pr-[2px] pl-1">
            <div className="flex h-[34px] items-center overflow-hidden pt-1 pl-[2px]">
              <ToolButton icon="check" label="Accept" />
              <ToolButton icon="editNote" label="Edit" />
              <ToolButton icon="plus" label="Add" />
              <ToolButton icon="copyAdd" label="Copy" />
              <ToolButton icon="deleteList" label="Delete" />
              <ToolButton icon="leftGray" label="Previous" />
              <ToolButton icon="rightGray" label="Next" />
            </div>
            <Rule />
            <p className={clsx(SANS, "pt-12 pl-5 text-[14px] leading-4")}>No data selected</p>
          </div>
        </aside>
      </main>
      <footer className="flex h-[14px] flex-none flex-col">
        <div className="h-[5px] bg-[#f0f0f0]" />
      </footer>
    </div>
  );
}
